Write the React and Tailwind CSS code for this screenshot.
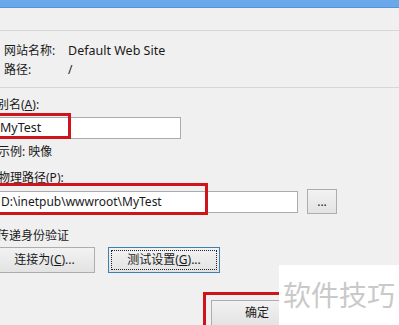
import React from "react";

const font = { fontFamily: '"Noto Sans", "Noto Sans CJK SC", sans-serif' };

function Btn({ children, className = "", focused = false }) {
  return (
    <div
      className={
        "relative flex items-center justify-center border bg-gradient-to-b from-[#f2f2f2] to-[#e3e3e3] text-[12px] text-[#1a1a1a] " +
        (focused ? "border-[#3c7fb1] " : "border-[#adadad] ") +
        className
      }
    >
      {focused && (
        <div className="absolute inset-[2px] border border-dotted border-[#222]" />
      )}
      <span className="relative">{children}</span>
    </div>
  );
}

export default function App() {
  return (
    <div
      className="relative w-[399px] h-[325px] overflow-hidden bg-[#f0f0f0] text-[12px] leading-[16px] text-[#1a1a1a]"
      style={font}
    >
      {/* title bar */}
      <div className="h-[8px] bg-[#6aa8ec] border-b border-[#5a93d4]" />
      <div className="h-[23px] border-b border-[#d6d6d6]" />
      {/* info */}
      <div className="pt-[11px] pb-[8px] border-b border-[#d6d6d6]">
        <div className="flex h-[18px] items-center">
          <span className="w-[68px] pl-[4px]">网站名称:</span>
          <span className="text-[12.5px]">Default Web Site</span>
        </div>
        <div className="flex h-[19px] items-center">
          <span className="w-[68px] pl-[4px]">路径:</span>
          <span>/</span>
        </div>
      </div>

      {/* alias */}
      <div className="mt-[9px] -ml-[3px]">
        别名(<span className="underline">A</span>):
      </div>
      <div className="mt-[4px] ml-[-10px] w-[191px] h-[22px] border border-[#ababab] bg-white flex items-center pl-[9px] text-[12.5px]">
        MyTest
      </div>
      <div className="mt-[5px] -ml-[2px] h-[16px]">示例: 映像</div>

      {/* physical path */}
      <div className="mt-[10px] -ml-[2px] h-[16px]">
        物理路径(<span className="underline">P</span>):
      </div>
      <div className="mt-[3px] flex items-center">
        <div className="ml-[-10px] w-[308px] h-[22px] border border-[#ababab] bg-white flex items-center pl-[10px] text-[12px]">
          D:\inetpub\wwwroot\MyTest
        </div>
        <Btn className="ml-[9px] w-[30px] h-[25px]">...</Btn>
      </div>

      {/* pass-through auth */}
      <div className="mt-[14px] -ml-[3px] h-[16px]">传递身份验证</div>
      <div className="mt-[3px] flex">
        <Btn className="ml-[-6px] w-[101px] h-[26px]">
          连接为(<span className="underline">C</span>)...
        </Btn>
        <Btn focused className="ml-[13px] w-[112px] h-[26px]">
          测试设置(<span className="underline">G</span>)...
        </Btn>
      </div>
      <div className="mt-[27px] flex">
        <Btn className="ml-[211px] w-[100px] h-[26px] pr-[8px]">确定</Btn>
      </div>

      {/* red annotation boxes */}
      <div className="absolute left-[-5px] top-[113px] w-[76px] h-[26px] border-[3px] border-[#d0141c]" />
      <div className="absolute left-[-5px] top-[183px] w-[213px] h-[32px] border-[3px] border-[#d0141c]" />
      <div className="absolute left-[203px] top-[292px] w-[90px] h-[40px] border-[3px] border-[#d0141c]" />

      {/* watermark */}
      <div className="absolute left-[279px] top-[265px] w-[120px] h-[60px] bg-white flex items-center pl-[4px]">
        <span
          className="text-[28px] leading-[32px] text-[#c9c9c9] mt-[-2px]"
          style={{ fontFamily: '"Noto Sans CJK SC", sans-serif' }}
        >
          软件技巧
        </span>
      </div>
    </div>
  );
}
